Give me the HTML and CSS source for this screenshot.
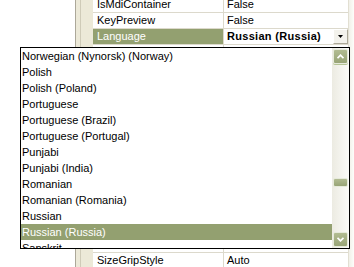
FILE: index.html
```html
<!DOCTYPE html>
<html>
<head>
    <meta charset="utf-8">
    <link rel="stylesheet" href="styles.css">
</head>
<body>
<div class="designer">
    <div class="surface"></div>

    <div class="grid">
        <div class="gutter"></div>

        <div class="rows">
            <div class="row">
                <div class="name">IsMdiContainer</div>
                <div class="value">False</div>
            </div>
            <div class="row">
                <div class="name">KeyPreview</div>
                <div class="value">False</div>
            </div>
            <div class="row selected">
                <div class="name">Language</div>
                <div class="value bold">
                    <span>Russian (Russia)</span>
                    <div class="drop-btn">
                        <svg width="5" height="3" viewBox="0 0 5 3"><polygon points="0,0 5,0 2.5,3" fill="#000"/></svg>
                    </div>
                </div>
            </div>
            <div class="row"><div class="name"></div><div class="value"></div></div>
            <div class="row"><div class="name"></div><div class="value"></div></div>
            <div class="row"><div class="name"></div><div class="value"></div></div>
            <div class="row"><div class="name"></div><div class="value"></div></div>
            <div class="row"><div class="name"></div><div class="value"></div></div>
            <div class="row"><div class="name"></div><div class="value"></div></div>
            <div class="row"><div class="name"></div><div class="value"></div></div>
            <div class="row"><div class="name"></div><div class="value"></div></div>
            <div class="row"><div class="name"></div><div class="value"></div></div>
            <div class="row"><div class="name"></div><div class="value"></div></div>
            <div class="row"><div class="name"></div><div class="value"></div></div>
            <div class="row"><div class="name"></div><div class="value"></div></div>
            <div class="row"><div class="name"></div><div class="value"></div></div>
            <div class="row">
                <div class="name">SizeGripStyle</div>
                <div class="value">Auto</div>
            </div>
        </div>

        <div class="grid-scroll"></div>
    </div>
</div>

<!-- language dropdown, open over the grid -->
<div class="dropdown">
    <ul class="items">
        <li>Norwegian (Nynorsk) (Norway)</li>
        <li>Polish</li>
        <li>Polish (Poland)</li>
        <li>Portuguese</li>
        <li>Portuguese (Brazil)</li>
        <li>Portuguese (Portugal)</li>
        <li>Punjabi</li>
        <li>Punjabi (India)</li>
        <li>Romanian</li>
        <li>Romanian (Romania)</li>
        <li>Russian</li>
        <li class="selected">Russian (Russia)</li>
        <li>Sanskrit</li>
    </ul>

    <div class="vscroll">
        <div class="sb-btn up">
            <svg width="7" height="5" viewBox="0 0 7 5"><polyline points="0.5,4.2 3.5,1.2 6.5,4.2" fill="none" stroke="#fff" stroke-width="1.8"/></svg>
        </div>
        <div class="thumb"></div>
        <div class="sb-btn down">
            <svg width="7" height="5" viewBox="0 0 7 5"><polyline points="0.5,0.8 3.5,3.8 6.5,0.8" fill="none" stroke="#fff" stroke-width="1.8"/></svg>
        </div>
    </div>
</div>
</body>
</html>
```

FILE: styles.css
```css
* {
    box-sizing: border-box;
}

body {
    margin: 0;
    width: 354px;
    height: 267px;
    overflow: hidden;
    position: relative;
    background: #fff;
    font-family: "Liberation Sans", Arial, sans-serif;
    font-size: 11px;
    color: #000;
}

.designer {
    display: flex;
    height: 267px;
}

.surface {
    width: 75px;
    background: #fff;
}

.grid {
    flex: 1;
    display: flex;
    border-left: 1px solid #aca899;
    background: #ece9d8;
    overflow: hidden;
}

.gutter {
    width: 17px;
    background: linear-gradient(to right, #ece9d8 4px, #cfcbb8 4px, #cfcbb8 5px, #ece9d8 5px);
}

.rows {
    width: 255px;
    margin-top: -3px;
    background: #fff;
}

.row {
    display: flex;
    height: 16px;
    line-height: 15px;
    border-bottom: 1px solid #dcd9cc;
    white-space: nowrap;
}

.name {
    width: 131px;
    padding-left: 4px;
    border-right: 1px solid #dcd9cc;
}

.value {
    flex: 1;
    display: flex;
    padding-left: 3px;
}

.row.selected .name {
    background: #93a070;
    color: #fff;
}

.bold {
    font-weight: bold;
    letter-spacing: 0.3px;
}

.drop-btn {
    margin-left: auto;
    width: 15px;
    height: 15px;
    background: #f3f2ec;
    border: 1px solid #fff;
    border-right-color: #aca899;
    border-bottom-color: #aca899;
    display: flex;
    align-items: center;
    justify-content: center;
}

.grid-scroll {
    flex: 1;
    border-left: 1px solid #e2dfd2;
    background: linear-gradient(to right, #f1f0e8, #fdfdfa);
}

.dropdown {
    position: absolute;
    left: 20px;
    top: 47px;
    width: 330px;
    height: 202px;
    border: 1px solid #000;
    background: #fff;
    display: flex;
}

.items {
    flex: 1;
    margin: 0;
    padding: 0;
    list-style: none;
    overflow: hidden;
}

.items li {
    height: 16px;
    padding: 1px 0 0 1px;
    line-height: 15px;
    white-space: nowrap;
}

.items li.selected {
    background: #93a070;
    color: #fff;
}

.vscroll {
    width: 17px;
    display: flex;
    flex-direction: column;
    align-items: center;
    padding: 1px 0;
    background: linear-gradient(to right, #ecebe2, #fbfbf8);
}

.sb-btn {
    width: 15px;
    height: 15px;
    border: 1px solid #e6eadb;
    border-radius: 2px;
    background: linear-gradient(to bottom, #b2bc92, #98a476);
    display: flex;
    align-items: center;
    justify-content: center;
}

.sb-btn.up {
    box-shadow: 0 1px 0 #b5c495;
}

.sb-btn.down {
    margin-top: auto;
}

.thumb {
    margin-top: 114px;
    width: 15px;
    height: 9px;
    border: 1px solid #e6eadb;
    border-radius: 2px;
    background: linear-gradient(to bottom, #b2bc92, #98a476);
}
```
